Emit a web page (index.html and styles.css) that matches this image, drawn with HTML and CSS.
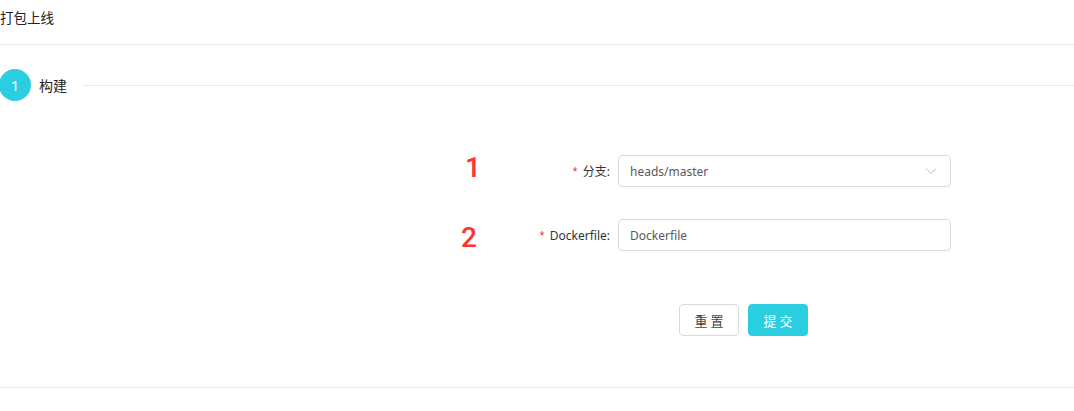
FILE: index.html
```html
<!DOCTYPE html>
<html lang="zh">
<head>
<meta charset="utf-8">
<link rel="stylesheet" href="styles.css">
</head>
<body>
<div class="header">打包上线</div>
<div class="steps">
  <div class="step-icon">1</div>
  <div class="step-title">构建</div>
  <div class="step-line"></div>
</div>
<div class="form">
  <div class="row">
    <div class="label-cell">
      <span class="mark mark1">1</span>
      <span class="label"><span class="req">*</span>分支:</span>
    </div>
    <div class="control select">
      <span>heads/master</span>
      <svg class="arrow" width="12" height="8" viewBox="0 0 12 8"><path d="M1 1.5 L6 6.5 L11 1.5" fill="none" stroke="#bfbfbf" stroke-width="1"/></svg>
    </div>
  </div>
  <div class="row">
    <div class="label-cell">
      <span class="mark mark2">2</span>
      <span class="label"><span class="req">*</span>Dockerfile:</span>
    </div>
    <div class="control input"><span>Dockerfile</span></div>
  </div>
  <div class="actions">
    <button class="btn">重 置</button>
    <button class="btn primary">提 交</button>
  </div>
</div>
<div class="footer-line"></div>
</body>
</html>
```
FILE: styles.css
```css
* { box-sizing: border-box; }
body {
  margin: 0;
  background: #fff;
  font-family: "Noto Sans", "Noto Sans CJK SC", sans-serif;
  color: rgba(0,0,0,0.85);
  font-size: 12px;
}
.header {
  height: 45px;
  line-height: 36px;
  font-size: 13.5px;
  border-bottom: 1px solid #e8e8e8;
  color: #222;
}
.steps {
  display: flex;
  align-items: center;
  margin-top: 24px;
  height: 32px;
}
.step-icon {
  width: 32px;
  height: 32px;
  border-radius: 50%;
  background: #2bcde0;
  color: #fff;
  font-size: 15px;
  display: flex;
  align-items: center;
  justify-content: center;
  margin-left: -1px;
}
.step-title {
  margin-left: 8px;
  font-size: 14px;
  color: #222;
}
.step-line {
  flex: 1;
  height: 1px;
  background: #e8e8e8;
  margin-left: 16px;
}
.form {
  margin-top: 54px;
}
.row {
  display: flex;
  align-items: center;
  height: 32px;
  margin-bottom: 32px;
}
.label-cell {
  width: 618px;
  display: flex;
  align-items: center;
  height: 32px;
}
.mark {
  color: #ff3333;
  font-family: Roboto, "Noto Sans", sans-serif;
  font-size: 28px;
  font-weight: 500;
  line-height: 32px;
}
.mark1 { margin-left: 465px; margin-top: -6px; }
.mark2 { margin-left: 461px; margin-top: 6px; }
.label {
  margin-left: auto;
  margin-right: 8px;
  color: #333;
  font-size: 12px;
}
.req {
  color: #f5222d;
  margin-right: 4px;
  font-family: SimSun, "Liberation Mono", monospace;
}
.control {
  width: 333px;
  height: 32px;
  border: 1px solid #d9d9d9;
  border-radius: 4px;
  padding: 0 11px;
  display: flex;
  align-items: center;
  justify-content: space-between;
  color: #595959;
  font-size: 12px;
}
.arrow { margin-right: 2px; }
.actions {
  display: flex;
  gap: 9px;
  margin-left: 679px;
  margin-top: 53px;
}
.btn {
  width: 60px;
  height: 32px;
  border: 1px solid #d9d9d9;
  border-radius: 4px;
  background: #fff;
  color: #444;
  font-family: "Noto Sans CJK SC", sans-serif;
  font-size: 13px;
  padding: 0;
}
.btn.primary {
  background: #2bcde0;
  border-color: #2bcde0;
  color: #fff;
}
.footer-line {
  margin-top: 51px;
  height: 1px;
  background: #e8e8e8;
}
```
